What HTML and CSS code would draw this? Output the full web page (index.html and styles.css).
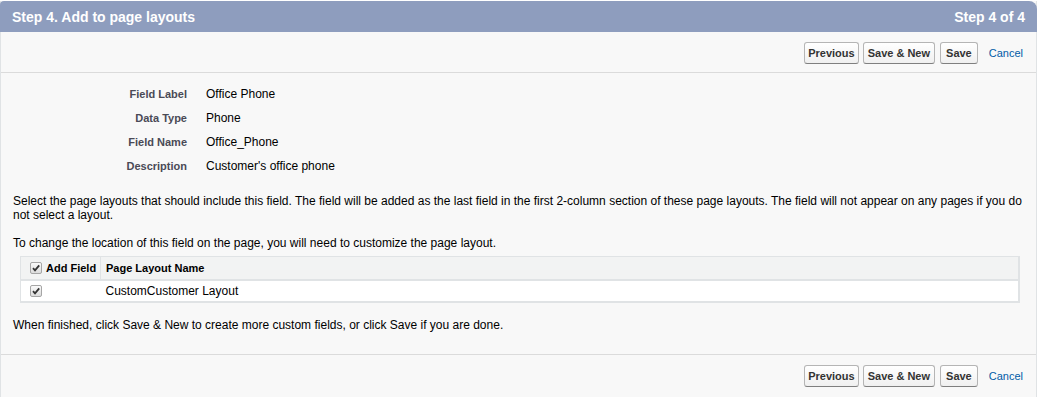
FILE: index.html
```html
<!DOCTYPE html>
<html lang="en">
<head>
    <meta charset="UTF-8">
    <title>Step 4. Add to page layouts</title>
    <link rel="stylesheet" href="styles.css">
</head>
<body>
    <div class="wizard">
        <div class="wizard-header">
            <h2>Step 4. Add to page layouts</h2>
            <span class="step">Step 4 of 4</span>
        </div>

        <!-- top buttons -->
        <div class="button-bar">
            <button class="btn">Previous</button>
            <button class="btn btn-new">Save &amp; New</button>
            <button class="btn btn-save">Save</button>
            <a href="#" class="cancel">Cancel</a>
        </div>

        <div class="content">
            <table class="detail">
                <tr><th>Field Label</th><td>Office Phone</td></tr>
                <tr><th>Data Type</th><td>Phone</td></tr>
                <tr><th>Field Name</th><td>Office_Phone</td></tr>
                <tr><th>Description</th><td>Customer's office phone</td></tr>
            </table>

            <p class="intro">Select the page layouts that should include this field. The field will be added as the last field in the first 2-column section of these page layouts. The field will not appear on any pages if you do not select a layout.</p>
            <p class="intro">To change the location of this field on the page, you will need to customize the page layout.</p>

            <table class="layouts">
                <thead>
                    <tr>
                        <th class="col-add"><span class="check"><svg viewBox="0 0 12 12" width="12" height="12"><path d="M3 6.2 L5 8.4 L9.2 3.4" fill="none" stroke="#333" stroke-width="1.8"/></svg></span>Add Field</th>
                        <th>Page Layout Name</th>
                    </tr>
                </thead>
                <tbody>
                    <tr>
                        <td class="col-add"><span class="check"><svg viewBox="0 0 12 12" width="12" height="12"><path d="M3 6.2 L5 8.4 L9.2 3.4" fill="none" stroke="#333" stroke-width="1.8"/></svg></span></td>
                        <td>CustomCustomer Layout</td>
                    </tr>
                </tbody>
            </table>

            <p class="done">When finished, click Save &amp; New to create more custom fields, or click Save if you are done.</p>
        </div>

        <!-- bottom buttons -->
        <div class="button-bar bottom">
            <button class="btn">Previous</button>
            <button class="btn btn-new">Save &amp; New</button>
            <button class="btn btn-save">Save</button>
            <a href="#" class="cancel">Cancel</a>
        </div>
    </div>
</body>
</html>
```

FILE: styles.css
```css
* {
    box-sizing: border-box;
    margin: 0;
    padding: 0;
}
body {
    font-family: Arial, "Liberation Sans", sans-serif;
    font-size: 12px;
    color: #000;
    background-color: #fff;
    padding-top: 1px;
}
.wizard {
    width: 1037px;
    background-color: #f8f8f8;
    border-left: 1px solid #e0e3e5;
    border-right: 1px solid #e0e3e5;
    min-height: 396px;
}
.wizard-header {
    display: flex;
    justify-content: space-between;
    align-items: center;
    height: 31px;
    padding: 0 12px 0 12px;
    background-color: #8e9dbe;
    border-radius: 4px 8px 0 0;
    margin: 0 -1px;
    color: #fff;
}
.wizard-header h2,
.wizard-header .step {
    font-size: 14px;
    font-weight: bold;
}
.button-bar {
    display: flex;
    justify-content: flex-end;
    align-items: center;
    gap: 4px;
    height: 41px;
    padding: 1px 13px 0 0;
    border-bottom: 1px solid #dbdbdb;
}
.button-bar.bottom {
    border-bottom: none;
    border-top: 1px solid #dbdbdb;
    margin-top: 22px;
    height: 43px;
}
.btn {
    font-family: Arial, "Liberation Sans", sans-serif;
    font-size: 11px;
    font-weight: bold;
    color: #333;
    height: 22px;
    padding: 0 3px;
    background: linear-gradient(#ffffff, #f0f0f0);
    border: 1px solid #b5b5b5;
    border-bottom-color: #7f7f7f;
    border-radius: 3px;
    cursor: pointer;
}
.btn-new {
    padding: 0 4px;
}
.btn-save {
    padding: 0 5px;
    margin-left: 1px;
}
.cancel {
    color: #015ba7;
    text-decoration: none;
    font-size: 11px;
    margin-left: 7px;
}
.content {
    padding: 9px 8px 0 12px;
}
.detail {
    border-collapse: collapse;
    margin-bottom: 16px;
}
.detail th {
    width: 193px;
    text-align: right;
    font-size: 11px;
    font-weight: bold;
    color: #4a4a56;
    height: 24px;
    padding-right: 19px;
}
.detail td {
    height: 24px;
}
.intro {
    line-height: 14px;
    margin-bottom: 14px;
}
.intro + .intro {
    margin-bottom: 6px;
}
.layouts {
    width: 1000px;
    margin-left: 7px;
    border-collapse: collapse;
    background-color: #fff;
    border: 1px solid #e0e3e5;
    border-right-width: 2px;
    border-bottom-width: 2px;
}
.layouts th {
    background-color: #f2f3f3;
    font-size: 11px;
    font-weight: bold;
    text-align: left;
    height: 23px;
    padding: 0 5px;
    border-bottom: 2px solid #e0e3e5;
}
.layouts th.col-add {
    border-right: 1px solid #e0e3e5;
}
.layouts td {
    height: 22px;
    padding: 0 5px;
}
.col-add {
    width: 80px;
    padding-left: 9px !important;
    padding-right: 3px !important;
    white-space: nowrap;
}
.check {
    display: inline-block;
    width: 12px;
    height: 12px;
    vertical-align: -2px;
    margin-right: 4px;
    border: 1px solid #a6a6a6;
    border-radius: 2px;
    background: linear-gradient(#fafafa, #dcdcdc);
}
.check svg {
    display: block;
    margin: -1px;
}
.done {
    margin-top: 15px;
}
```
